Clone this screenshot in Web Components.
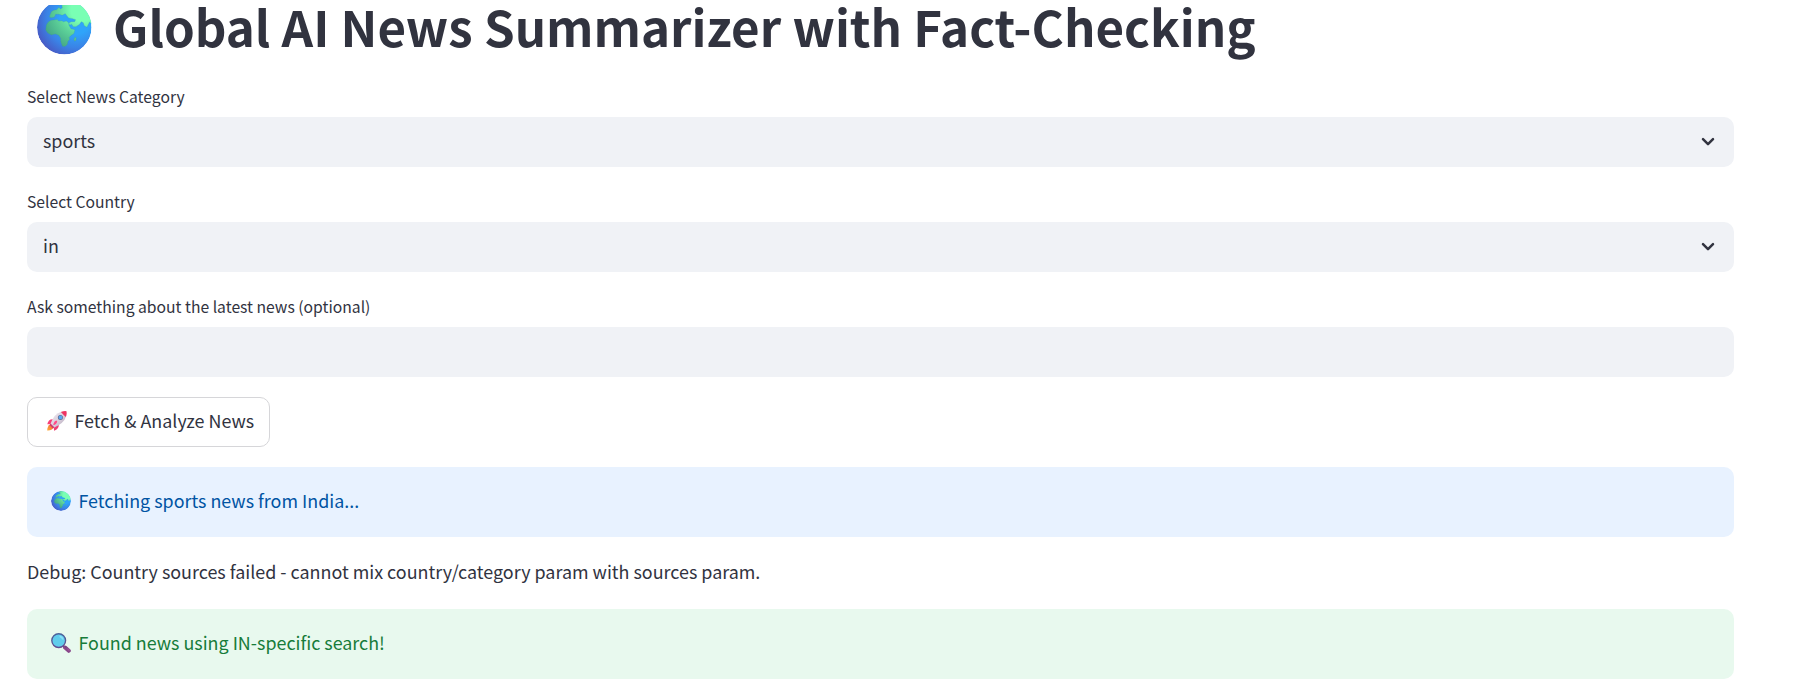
<!DOCTYPE html>
<html lang="en">
<head>
<meta charset="utf-8">
<title>Global AI News Summarizer</title>
<style>
body{margin:0;background:#fff;color:#31333f;font-family:"Noto Sans CJK SC","Noto Sans",sans-serif}
</style>
</head>
<body>
<news-app></news-app>
<script>
const define = (name, html) => {
  const template = document.createElement('template');
  template.innerHTML = html;
  customElements.define(name, class extends HTMLElement {
    constructor() {
      super();
      this.attachShadow({mode: 'open'}).append(template.content.cloneNode(true));
    }
  });
};

define('icon-globe', `<style>:host{display:block;flex:none}svg{display:block;width:100%;height:100%}</style>
<svg viewBox="23 0 164 164">
<defs>
<radialGradient id="sea" gradientUnits="userSpaceOnUse" cx="140" cy="55" r="135"><stop offset=".35" stop-color="#2fa4fa"/><stop offset=".65" stop-color="#3a83e6"/><stop offset="1" stop-color="#4b50bd"/></radialGradient>
<radialGradient id="land" gradientUnits="userSpaceOnUse" cx="160" cy="30" r="125"><stop offset=".28" stop-color="#79ffb4"/><stop offset=".6" stop-color="#5ed49a"/><stop offset="1" stop-color="#45a886"/></radialGradient>
<clipPath id="disc"><circle cx="105" cy="82" r="82"/></clipPath>
</defs>
<g clip-path="url(#disc)">
<circle cx="105" cy="82" r="82" fill="url(#sea)"/>
<g fill="url(#land)" stroke="#38959d" stroke-opacity=".45" stroke-width="1.5" stroke-linejoin="round">
<path d="M60 51L63 42Q65 33 73 31L82 29L89 22L93 27L99 24L97 11L90 17L87 9L97 2L112-3H200V84L181 66L173 82L165 77L162 68L156 65L151 73L140 80L132 80L127 73L121 76L118 69L126 65L136 65L139 59L130 56L118 54L113 48L108 41L99 46L89 43L79 43L75 52L65 53Z"/>
<path d="M51 75Q58 59 74 60L83 58L88 63L97 62L103 65L111 63L118 68L119 76L125 86L137 89L134 101L125 107L120 112L121 119L116 124L114 134L107 140L99 139L94 125L94 115L88 106L78 102L66 105L55 99L49 90Z"/>
<path d="M137 112L141 113L140 122L136 124L134 118Z"/>
</g>
</g>
</svg>`);

define('icon-rocket', `<style>:host{display:block;flex:none}svg{display:block;width:100%;height:100%}</style>
<svg viewBox="0 0 20 20">
<defs><linearGradient id="hull" x1="0" y1="0" x2="1" y2="1"><stop stop-color="#efe9f1"/><stop offset=".55" stop-color="#d9cedb"/><stop offset="1" stop-color="#aaa0b5"/></linearGradient>
<linearGradient id="flame" x1="1" y1="0" x2="0" y2="1"><stop stop-color="#f35c3b"/><stop offset="1" stop-color="#ffae37"/></linearGradient></defs>
<path d="M3.4 13.2Q.2 15 .2 19.5Q4.8 19.8 6.7 16.6Z" fill="url(#flame)"/>
<path d="M6.1 8.2Q1.2 7.9.3 13.3L4.8 13Z" fill="#f83f78"/>
<path d="M11.7 13.8Q12.2 18 7 19.8L6.9 15.3Z" fill="#ee3d75"/>
<path d="M3.4 13Q7.1 2.7 14.2.8L19 5.5Q17.2 12 6.9 16.7Z" fill="url(#hull)"/>
<path d="M13.9.9Q17-.2 19.5.2Q20 3.4 18.9 6Q17.3 4.8 13.9.9Z" fill="#ef3462"/>
<path d="M3.6 12.6L7.3 16.3L6 17.5L2.6 14.1Z" fill="#cf3870"/>
<path d="M9.4 9.6Q7.1 10 6.2 14.2Q9.6 13.6 10.3 10.6Z" fill="#ff4b87"/>
<circle cx="13.4" cy="6.5" r="2.5" fill="#5a6c96"/><circle cx="13.5" cy="6.4" r="1.8" fill="#58a9f2"/>
</svg>`);

define('icon-search', `<style>:host{display:block;flex:none}svg{display:block;width:100%;height:100%}</style>
<svg viewBox="0 0 20 20">
<defs><linearGradient id="rim" x1="0" y1="0" x2="0" y2="1"><stop stop-color="#4a639b"/><stop offset="1" stop-color="#624b91"/></linearGradient>
<linearGradient id="grip" x1="0" y1="0" x2="1" y2="1"><stop stop-color="#71437e"/><stop offset="1" stop-color="#a2569b"/></linearGradient></defs>
<path d="M11.8 12.3L14.1 14.5" stroke="#594b7e" stroke-width="1.7"/>
<path d="M14.1 14.6L17.8 17.8" stroke="#89478a" stroke-width="4" stroke-linecap="round"/>
<path d="M14.5 13.9L18 17" stroke="url(#grip)" stroke-width="1.5" stroke-linecap="round"/>
<circle cx="7.7" cy="7.6" r="6.9" fill="#60cdec" stroke="url(#rim)" stroke-width="1.35"/>
<path d="M8.3 2.5Q12.2 3 12.7 6.8Q11 6.9 10.3 5.2Q8.2 4.8 8.3 2.5Z" fill="#8be0f8"/>
</svg>`);

define('app-title', `<style>
:host{display:block;height:82px}
h1{margin:0;display:flex;align-items:flex-start;font-size:49.25px;line-height:51px;font-weight:700;white-space:nowrap}
icon-globe{width:54.6px;height:54.6px;margin:.2px 21.4px 0 10.1px;clip-path:inset(4.8px 0 0 0)}
</style><h1><icon-globe></icon-globe><slot></slot></h1>`);

define('form-field', `<style>
:host{display:block}
.label{height:29px;line-height:29px;margin-bottom:6px;font-size:15.7px;white-space:nowrap}
.box{box-sizing:border-box;height:50px;border-radius:10px;background:#f0f2f6;padding:0 16px;display:flex;align-items:center;justify-content:space-between;font-size:17.9px;line-height:30px}
.box ::slotted(span){margin-bottom:4px}
svg{display:none;width:20px;height:20px;flex:none}
:host([dropdown]) svg{display:block}
</style><div class="label"><slot name="label"></slot></div>
<div class="box"><slot></slot><svg viewBox="0 0 20 20"><path d="M5 7.2L10 12.2L15 7.2" fill="none" stroke="#31333f" stroke-width="2.5" stroke-linecap="round" stroke-linejoin="round"/></svg></div>`);

define('action-button', `<style>
:host{display:block}
button{box-sizing:border-box;width:243px;height:50px;border:1px solid #d6d6d9;border-radius:10px;background:#fff;color:inherit;font:inherit;font-size:17.9px;line-height:30px;padding:0 0 0 18.5px;display:flex;align-items:center;white-space:nowrap}
icon-rocket{width:20px;height:20px;margin-right:8px;margin-top:-2px}
::slotted(span){margin-bottom:4px}
</style><button type="button"><icon-rocket></icon-rocket><slot></slot></button>`);

define('status-alert', `<style>
:host{display:flex;align-items:center;box-sizing:border-box;height:70px;padding:0 24px;border-radius:10px;font-size:17.9px;line-height:30px;gap:7.5px;background:#e8f2ff;color:#0054a3}
:host([kind="success"]){background:#e8f9ee;color:#177c3a}
::slotted([slot="icon"]){width:20px;height:20px;margin-top:-2px}
::slotted(span){margin-bottom:4px}
</style><slot name="icon"></slot><slot></slot>`);

define('debug-line', `<style>:host{display:block;height:32px;line-height:28px;font-size:17.91px;white-space:nowrap}</style><slot></slot>`);

define('news-app', `<style>
:host{display:block;width:1707px;margin-left:27px}
main{display:flex;flex-direction:column;gap:20px}
app-title{margin-bottom:-20px}
</style>
<main>
<app-title><span>Global AI News Summarizer with Fact-Checking</span></app-title>
<form-field dropdown><span slot="label">Select News Category</span><span>sports</span></form-field>
<form-field dropdown><span slot="label">Select Country</span><span>in</span></form-field>
<form-field><span slot="label">Ask something about the latest news (optional)</span></form-field>
<action-button><span>Fetch &amp; Analyze News</span></action-button>
<status-alert><icon-globe slot="icon"></icon-globe><span>Fetching sports news from India...</span></status-alert>
<debug-line>Debug: Country sources failed - cannot mix country/category param with sources param.</debug-line>
<status-alert kind="success"><icon-search slot="icon"></icon-search><span>Found news using IN-specific search!</span></status-alert>
</main>`);
</script>
</body>
</html>
